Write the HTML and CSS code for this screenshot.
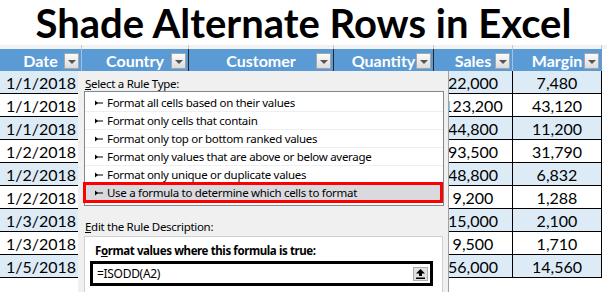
FILE: index.html
```html
<!DOCTYPE html>
<html lang="en">
  <head>
    <meta charset="UTF-8" />
    <title>Shade Alternate Rows in Excel</title>
    <link rel="stylesheet" href="styles.css">
  </head>
  <body>
    <h1 class="title">Shade Alternate Rows in Excel</h1>

    <div class="colbar">
      <span></span><span></span><span></span><span></span><span></span><span></span>
    </div>

    <div class="sheet">
      <div class="row head">
        <div class="cell sep-light">Date<span class="filter"></span></div>
        <div class="cell sep-dark">Country<span class="filter"></span></div>
        <div class="cell sep-dark">Customer<span class="filter"></span></div>
        <div class="cell sep-dark">Quantity<span class="filter"></span></div>
        <div class="cell sep-light">Sales<span class="filter"></span></div>
        <div class="cell">Margin<span class="filter"></span></div>
      </div>

      <div class="row shade"><div class="cell">1/1/2018</div><div class="cell"></div><div class="cell"></div><div class="cell"></div><div class="cell line">22,000</div><div class="cell line">7,480</div></div>
      <div class="row"><div class="cell">1/1/2018</div><div class="cell"></div><div class="cell"></div><div class="cell"></div><div class="cell line">123,200</div><div class="cell line">43,120</div></div>
      <div class="row shade"><div class="cell">1/1/2018</div><div class="cell"></div><div class="cell"></div><div class="cell"></div><div class="cell line">44,800</div><div class="cell line">11,200</div></div>
      <div class="row"><div class="cell">1/2/2018</div><div class="cell"></div><div class="cell"></div><div class="cell"></div><div class="cell line">93,500</div><div class="cell line">31,790</div></div>
      <div class="row shade"><div class="cell">1/2/2018</div><div class="cell"></div><div class="cell"></div><div class="cell"></div><div class="cell line">48,800</div><div class="cell line">6,832</div></div>
      <div class="row"><div class="cell">1/2/2018</div><div class="cell"></div><div class="cell"></div><div class="cell"></div><div class="cell line">9,200</div><div class="cell line">1,288</div></div>
      <div class="row shade"><div class="cell">1/3/2018</div><div class="cell"></div><div class="cell"></div><div class="cell"></div><div class="cell line">15,000</div><div class="cell line">2,100</div></div>
      <div class="row"><div class="cell">1/3/2018</div><div class="cell"></div><div class="cell"></div><div class="cell"></div><div class="cell line">9,500</div><div class="cell line">1,710</div></div>
      <div class="row shade"><div class="cell">1/5/2018</div><div class="cell"></div><div class="cell"></div><div class="cell"></div><div class="cell line">56,000</div><div class="cell line">14,560</div></div>
    </div>

    <!-- New Formatting Rule dialog, lying over the sheet -->
    <div class="dialog">
      <div class="dlg-label"><u>S</u>elect a Rule Type:</div>
      <div class="listbox">
        <div class="item"><svg class="arrow" width="8" height="6" viewBox="0 0 8 6"><path d="M0 0.5 L3 3 L0 5.5 Z" fill="#000"/><rect x="0" y="2.5" width="8" height="1" fill="#000"/></svg>Format all cells based on their values</div>
        <div class="item"><svg class="arrow" width="8" height="6" viewBox="0 0 8 6"><path d="M0 0.5 L3 3 L0 5.5 Z" fill="#000"/><rect x="0" y="2.5" width="8" height="1" fill="#000"/></svg>Format only cells that contain</div>
        <div class="item"><svg class="arrow" width="8" height="6" viewBox="0 0 8 6"><path d="M0 0.5 L3 3 L0 5.5 Z" fill="#000"/><rect x="0" y="2.5" width="8" height="1" fill="#000"/></svg>Format only top or bottom ranked values</div>
        <div class="item"><svg class="arrow" width="8" height="6" viewBox="0 0 8 6"><path d="M0 0.5 L3 3 L0 5.5 Z" fill="#000"/><rect x="0" y="2.5" width="8" height="1" fill="#000"/></svg>Format only values that are above or below average</div>
        <div class="item"><svg class="arrow" width="8" height="6" viewBox="0 0 8 6"><path d="M0 0.5 L3 3 L0 5.5 Z" fill="#000"/><rect x="0" y="2.5" width="8" height="1" fill="#000"/></svg>Format only unique or duplicate values</div>
        <div class="item selected"><svg class="arrow" width="8" height="6" viewBox="0 0 8 6"><path d="M0 0.5 L3 3 L0 5.5 Z" fill="#000"/><rect x="0" y="2.5" width="8" height="1" fill="#000"/></svg>Use a formula to determine which cells to format</div>
      </div>

      <div class="dlg-label edit"><u>E</u>dit the Rule Description:</div>
      <div class="desc">
        <div class="desc-title">F<u>o</u>rmat values where this formula is true:</div>
        <div class="formula">
          <span>=ISODD(A2)</span>
          <span class="collapse">
            <svg width="9" height="10" viewBox="0 0 9 10"><path d="M4.5 0 L9 4.5 L6 4.5 L6 7 L3 7 L3 4.5 L0 4.5 Z" fill="#000"/><rect x="0" y="8.5" width="9" height="1.5" fill="#000"/></svg>
          </span>
        </div>
      </div>
    </div>
  </body>
</html>
```

FILE: styles.css
```css
body {
  margin: 0;
  width: 607px;
  height: 292px;
  overflow: hidden;
  background: #fff;
  font-family: Lato, "Liberation Sans", sans-serif;
  position: relative;
}

.title {
  margin: 0;
  height: 45px;
  line-height: 46px;
  font-size: 40px;
  font-weight: 700;
  text-align: center;
  color: #000;
}

/* thin strip of the sheet's column heading above the table */
.colbar {
  display: grid;
  grid-template-columns: 82px 107px 145px 100px 79px 89px;
  height: 4px;
  background: #f2f2f2;
}

.colbar span {
  border-right: 1px solid #c6c6c6;
}

.sheet {
  width: 602px;
}

.row {
  display: grid;
  grid-template-columns: 82px 107px 145px 100px 79px 89px;
  height: 23px;
  border-bottom: 1px solid #000;
  box-sizing: border-box;
  font-size: 16px;
  color: #000;
}

.row.shade {
  background: #ddebf7;
}

.cell {
  display: flex;
  align-items: center;
  justify-content: center;
  position: relative;
  box-sizing: border-box;
  white-space: nowrap;
}

.cell.line {
  border-right: 1px solid #000;
}

.row.head {
  height: 22px;
  border-bottom: none;
  background: #5b9bd5;
  color: #fff;
  font-weight: 700;
}

.head .cell {
  border-right: 1px solid #5b9bd5;
}

.head .sep-light {
  border-right-color: #9fc2e7;
}

.head .sep-dark {
  border-right-color: #262626;
}

.filter {
  position: absolute;
  right: 2px;
  bottom: 2px;
  width: 13px;
  height: 14px;
  background: linear-gradient(#fbfbfb, #dcdcdc);
  border: 1px solid #a6a6a6;
}

.filter::after {
  content: "";
  position: absolute;
  left: 3px;
  top: 6px;
  border-left: 4px solid transparent;
  border-right: 4px solid transparent;
  border-top: 4px solid #555;
}

/* Dialog */
.dialog {
  position: absolute;
  left: 78px;
  top: 71px;
  width: 371px;
  height: 221px;
  box-sizing: border-box;
  background: #f0f0f0;
  border-right: 1px solid #a0a0a0;
  font-family: "Noto Sans", "Liberation Sans", sans-serif;
  font-size: 11.5px;
  letter-spacing: -0.3px;
  color: #000;
}

.dlg-label {
  margin: 6px 0 0 7px;
  height: 14px;
  line-height: 14px;
}

.dlg-label.edit {
  margin-top: 14px;
}

.listbox {
  margin-left: 6px;
  width: 360px;
  height: 115px;
  box-sizing: border-box;
  background: #fff;
  border: 1px solid #828790;
  padding-top: 2px;
}

.item {
  display: flex;
  align-items: center;
  height: 18px;
  padding-left: 10px;
  box-sizing: border-box;
  border-bottom: 1px solid #efefef;
  white-space: nowrap;
}

.arrow {
  margin-right: 4px;
  flex: none;
}

.item.selected {
  height: 21px;
  margin: -2px 0 0 -2px;
  padding-left: 9px;
  background: #dadade;
  border: 3px solid #f00;
}

.desc {
  margin: 2px 0 0 6px;
  width: 359px;
  height: 60px;
  box-sizing: border-box;
  background: #fff;
  border: 1px solid #d0d0d0;
}

.desc-title {
  margin: 7px 0 0 10px;
  height: 14px;
  line-height: 14px;
  font-weight: 700;
  letter-spacing: -0.4px;
}

.formula {
  display: flex;
  align-items: center;
  justify-content: space-between;
  margin: 3px 0 0 5px;
  width: 343px;
  height: 25px;
  box-sizing: border-box;
  border: 3px solid #000;
  padding: 0 2px 0 4px;
  font-size: 12px;
}

.collapse {
  display: flex;
  align-items: center;
  justify-content: center;
  width: 15px;
  height: 14px;
  box-sizing: border-box;
  background: #e1e1e1;
  border: 1px solid #adadad;
}
```
